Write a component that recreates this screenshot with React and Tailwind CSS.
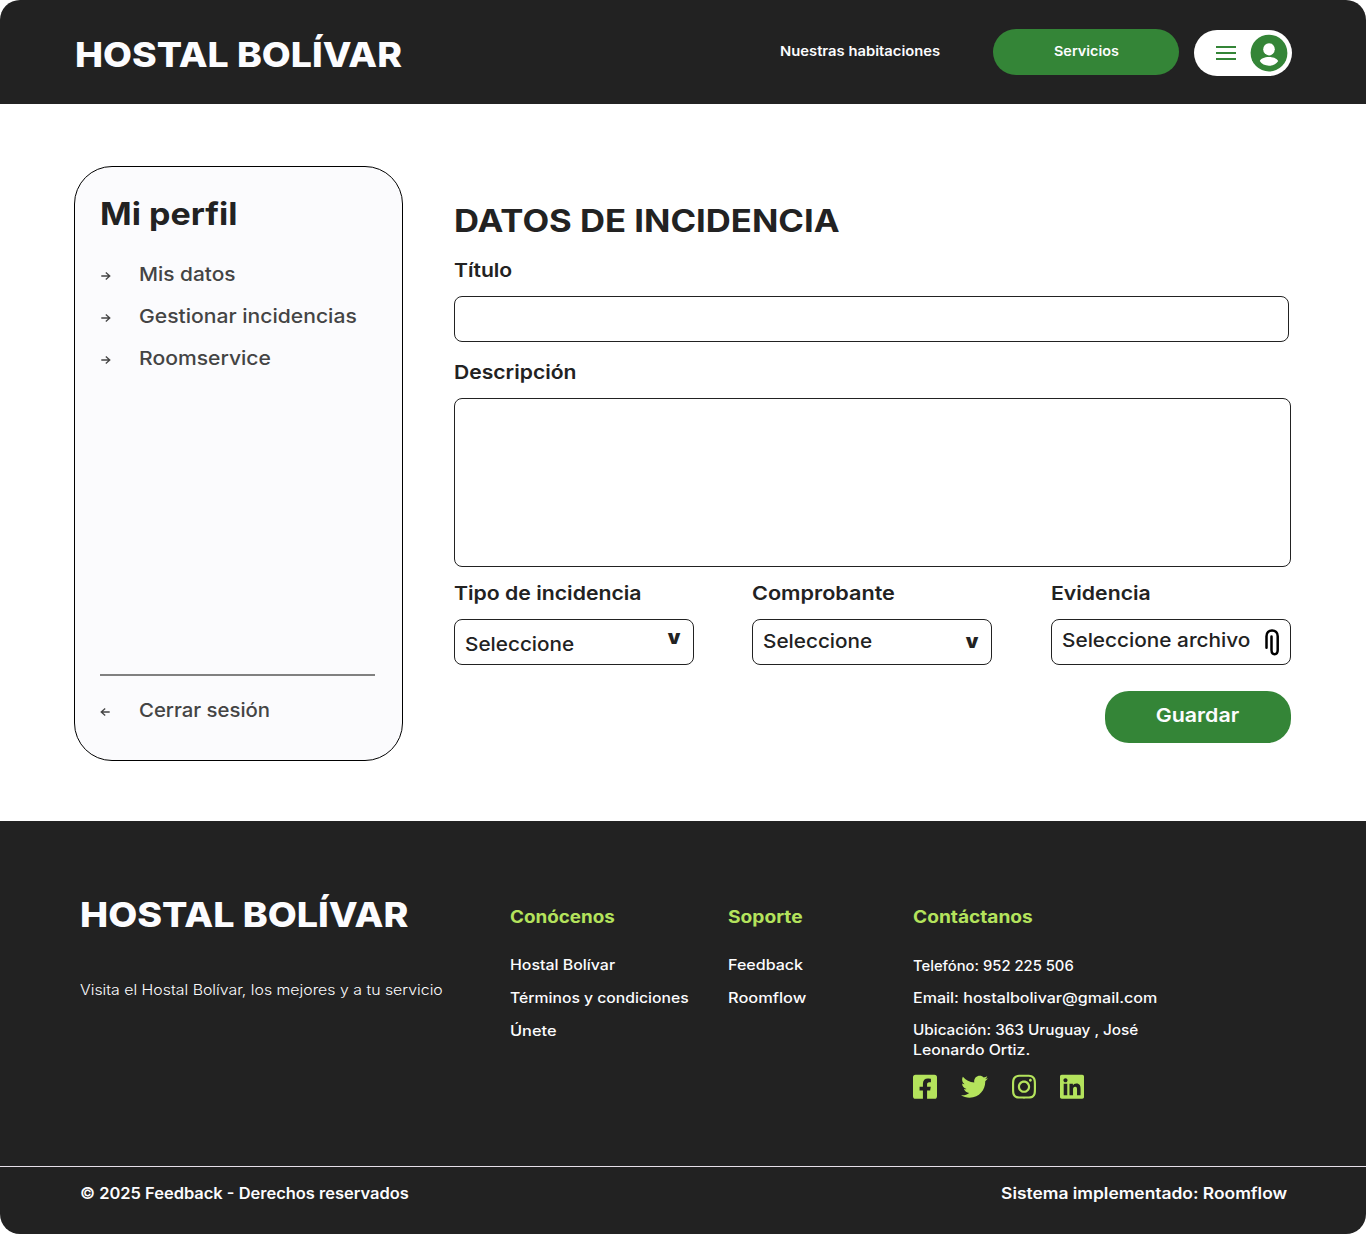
import React from 'react';
import { FaFacebookSquare, FaTwitter, FaInstagram, FaLinkedin } from 'react-icons/fa';

function Arrow({ className = '' }) {
  return (
    <svg className={className} width="11" height="10" viewBox="0 0 11 10" fill="none" stroke="#444444" strokeWidth="1.3">
      <path d="M1.3 5H9.7M5.8 1.4L9.8 5L5.8 8.6" />
    </svg>
  );
}

function AccountMenu() {
  return (
    <button className="flex h-[46px] w-[98px] items-center rounded-full bg-white pl-[22px]">
      <span className="flex w-5 flex-col gap-1">
        <span className="h-0.5 bg-[#348537]" />
        <span className="h-0.5 bg-[#348537]" />
        <span className="h-0.5 bg-[#348537]" />
      </span>
      <svg className="ml-3.5" width="38" height="38" viewBox="0 0 38 38">
        <circle cx="19" cy="19.1" r="18.4" fill="#348537" />
        <ellipse cx="19" cy="15.3" rx="5.8" ry="6.1" fill="#fff" />
        <path d="M19 22.9c4.6 0 8.6 1.9 9.2 4.2c-1.700 2.900-5.200 4.700-9.200 4.700s-7.500-1.800-9.200-4.700c.6-2.300 4.600-4.200 9.200-4.200z" fill="#fff" />
      </svg>
    </button>
  );
}

function W({ children, className = '', origin = 'origin-left' }) {
  return <span className={'inline-block whitespace-nowrap ' + origin + ' ' + className}>{children}</span>;
}

function Header() {
  return (
    <header className="flex h-[104px] items-start rounded-t-[20px] bg-[#222222] pl-[75px] text-[#fcfcfe]">
      <div className="mt-[34px] flex h-10 w-[705px] items-center text-[34.7px] font-extrabold leading-none">
        <W className="scale-x-[1.08]">HOSTAL BOLÍVAR</W>
      </div>
      <nav className="flex text-[13.5px] font-semibold leading-none">
        <a className="-ml-[0.5px] mt-[30px] flex h-11 w-[213.5px] items-center"><W className="scale-x-[1.095]">Nuestras habitaciones</W></a>
        <a className="mt-[29px] flex h-[46px] w-[186px] items-center justify-center rounded-full bg-[#348537] pb-px"><W origin="origin-center" className="scale-x-[1.065]">Servicios</W></a>
      </nav>
      <div className="ml-[15px] mt-[30px]"><AccountMenu /></div>
    </header>
  );
}

function SideItem({ children, className, flip }) {
  return (
    <a className="flex h-[42px] items-center text-[19.2px] font-medium leading-none text-[#444444]">
      <Arrow className={flip ? 'mt-[3px] -scale-x-100' : 'mt-[3px]'} />
      <W className={'ml-[27.5px] mt-px ' + className}>{children}</W>
    </a>
  );
}

function Sidebar() {
  return (
    <aside className="flex h-[595px] w-[329px] flex-col rounded-[38px] border border-black bg-[#fbfbfd] pl-[25px] pt-[26px]">
      <h2 className="flex h-10 items-center text-[31px] font-bold leading-none text-[#222222]"><W className="scale-x-[1.097]">Mi perfil</W></h2>
      <nav className="mt-5">
        <SideItem className="scale-x-[1.087]">Mis datos</SideItem>
        <SideItem className="scale-x-[1.1]">Gestionar incidencias</SideItem>
        <SideItem className="scale-x-[1.1]">Roomservice</SideItem>
      </nav>
      <div className="mb-[50px] mt-auto">
        <div className="mb-[13px] h-0.5 w-[275px] bg-[#808080]" />
        <div className="-mb-[21px]">
          <SideItem flip className="scale-x-[1.06]">Cerrar sesión</SideItem>
        </div>
      </div>
    </aside>
  );
}

function Label({ children, className }) {
  return <label className="flex h-6 items-center text-[19.2px] font-semibold leading-none"><W className={className}>{children}</W></label>;
}

function PaperClip() {
  return (
    <svg className="mt-[9px]" width="14" height="27" viewBox="0 0 14 27" fill="none" stroke="#000" strokeWidth="2.5" strokeLinecap="round">
      <path d="M1.500 18.800V7.200C1.500 3.500 3.900 1.400 7.100 1.400S12.700 3.500 12.700 7.200V21C12.700 23.900 11.300 25.200 9.600 25.200S6.500 23.900 6.500 21V7.400" />
    </svg>
  );
}

const box = 'mt-[13px] flex h-[46px] w-60 items-start justify-between rounded-lg border border-[#222222] pl-2.5 text-[19.2px] font-medium leading-none';

function IncidentForm() {
  return (
    <form className="ml-[51px] w-[837px] text-[#222222]">
      <h1 className="mt-[34px] flex h-10 items-center text-[31px] font-bold leading-none"><W className="scale-x-[1.118]">DATOS DE INCIDENCIA</W></h1>
      <div className="mt-[19px]"><Label className="scale-x-[1.1]">Título</Label></div>
      <div className="mt-[13px] h-[46px] w-[835px] rounded-lg border border-[#222222]" />
      <div className="mt-[19px]"><Label className="scale-x-[1.1]">Descripción</Label></div>
      <div className="mt-[13px] h-[169px] rounded-lg border border-[#222222]" />
      <div className="mt-[15px] flex">
        <div>
          <Label className="scale-x-[1.106]">Tipo de incidencia</Label>
          <div className={box}>
            <W className="mt-[14.5px] scale-x-[1.08]">Seleccione</W>
            <span className="mr-[12.5px] mt-[7px] text-[20px] font-black">v</span>
          </div>
        </div>
        <div className="ml-[58px]">
          <Label className="scale-x-[1.127]">Comprobante</Label>
          <div className={box}>
            <W className="mt-[11.5px] scale-x-[1.08]">Seleccione</W>
            <span className="mr-[12.5px] mt-[11px] text-[20px] font-black">v</span>
          </div>
        </div>
        <div className="ml-[59px]">
          <Label className="scale-x-[1.106]">Evidencia</Label>
          <div className={box + ' pr-[11px]'}>
            <W className="mt-[10.5px] scale-x-[1.083]">Seleccione archivo</W>
            <PaperClip />
          </div>
        </div>
      </div>
      <div className="mt-[26px] flex justify-end">
        <button type="button" className="flex h-[52px] w-[186px] items-center justify-center rounded-[24px] bg-[#348537] pb-[3px] pr-px text-[19.2px] font-semibold leading-none text-[#fcfcfe]"><W origin="origin-center" className="scale-x-[1.115]">Guardar</W></button>
      </div>
    </form>
  );
}

function Heading({ children, className }) {
  return <h3 className="flex h-6 items-center text-[17.3px] font-bold leading-none text-[#b4e35c]"><W className={className}>{children}</W></h3>;
}

function Footer() {
  return (
    <footer className="h-[413px] rounded-b-[20px] bg-[#222222] text-[#fcfcfe]">
      <div className="flex h-[345px] pl-20 text-[14.4px] font-medium leading-none">
        <div className="w-[430px] pt-[73px]">
          <div className="flex h-10 items-center text-[34.7px] font-extrabold leading-none"><W className="scale-x-[1.085]">HOSTAL BOLÍVAR</W></div>
          <p className="mt-[46px] flex h-5 items-center font-light"><W className="scale-x-[1.102]">Visita el Hostal Bolívar, los mejores y a tu servicio</W></p>
        </div>
        <div className="w-[218px] pt-[84px]">
          <Heading className="scale-x-[1.09]">Conócenos</Heading>
          <ul className="mt-[19.5px]">
            <li className="flex h-[33px] items-center"><W className="scale-x-[1.105]">Hostal Bolívar</W></li>
            <li className="flex h-[33px] items-center"><W className="scale-x-[1.092]">Términos y condiciones</W></li>
            <li className="flex h-[33px] items-center"><W className="scale-x-[1.135]">Únete</W></li>
          </ul>
        </div>
        <div className="w-[185px] pt-[84px]">
          <Heading className="scale-x-[1.11]">Soporte</Heading>
          <ul className="mt-[19.5px]">
            <li className="flex h-[33px] items-center"><W className="scale-x-[1.115]">Feedback</W></li>
            <li className="flex h-[33px] items-center"><W className="scale-x-[1.138]">Roomflow</W></li>
          </ul>
        </div>
        <div className="pt-[84px]">
          <Heading className="scale-x-[1.107]">Contáctanos</Heading>
          <ul className="mt-[21px]">
            <li className="flex h-8 items-center"><W className="scale-x-[1.027]">Telefóno: 952 225 506</W></li>
            <li className="flex h-8 items-center"><W className="scale-x-[1.115]">Email: hostalbolivar@gmail.com</W></li>
            <li className="mt-1.5 flex h-5 items-center"><W className="scale-x-[1.063]">Ubicación: 363 Uruguay , José</W></li>
            <li className="flex h-5 items-center"><W className="scale-x-[1.1]">Leonardo Ortiz.</W></li>
          </ul>
          <div className="mt-[13px] flex items-center text-[27.43px] text-[#b4e35c]">
            <FaFacebookSquare className="w-6" />
            <FaTwitter className="ml-6 w-[27px]" />
            <FaInstagram className="ml-6 w-6" />
            <FaLinkedin className="ml-6 w-6" />
          </div>
        </div>
      </div>
      <div className="flex h-[55px] items-center justify-between border-t border-[#e6e0e9] pl-[79.5px] pr-[79px] text-[15.4px] font-semibold leading-none">
        <W className="scale-x-[1.069]">© 2025 Feedback - Derechos reservados</W>
        <W origin="origin-right" className="scale-x-[1.13]">Sistema implementado: Roomflow</W>
      </div>
    </footer>
  );
}

export default function App() {
  return (
    <div className="h-[1234px] w-[1366px] bg-white font-['Inter','Noto_Sans',sans-serif]">
      <Header />
      <main className="flex h-[717px] pl-[74px] pt-[62px]">
        <Sidebar />
        <IncidentForm />
      </main>
      <Footer />
    </div>
  );
}
